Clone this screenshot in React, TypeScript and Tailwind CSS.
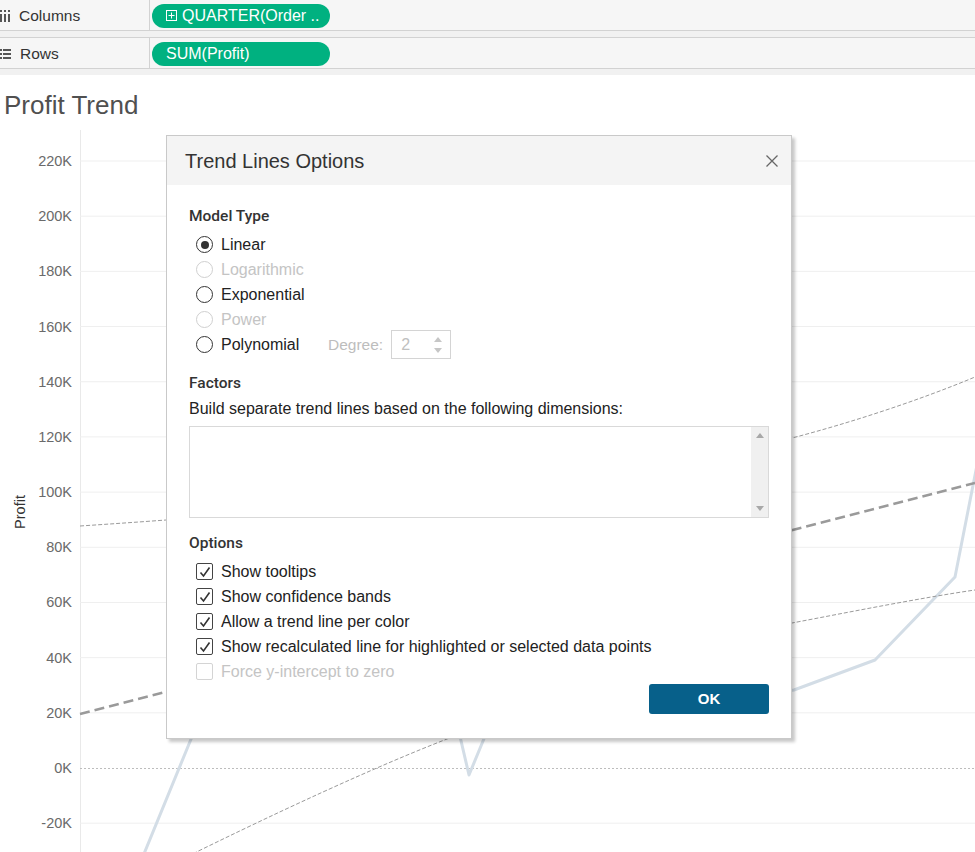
import React from "react";

const FONT = "font-['Liberation_Sans',Arial,sans-serif]";

function ColumnsIcon() {
  return (
    <svg width="10" height="12" viewBox="0 0 10 12" className="shrink-0">
      <rect x="0" y="0" width="2" height="2" fill="#555" />
      <rect x="0" y="4" width="2" height="8" fill="#555" />
      <rect x="4" y="0" width="2" height="2" fill="#555" />
      <rect x="4" y="4" width="2" height="8" fill="#555" />
      <rect x="8" y="0" width="2" height="2" fill="#555" />
      <rect x="8" y="4" width="2" height="8" fill="#555" />
    </svg>
  );
}

function RowsIcon() {
  return (
    <svg width="11" height="10" viewBox="0 0 11 10" className="shrink-0">
      <rect x="0" y="0" width="2" height="2" fill="#555" />
      <rect x="3" y="0" width="8" height="2" fill="#555" />
      <rect x="0" y="4" width="2" height="2" fill="#555" />
      <rect x="3" y="4" width="8" height="2" fill="#555" />
      <rect x="0" y="8" width="2" height="2" fill="#555" />
      <rect x="3" y="8" width="8" height="2" fill="#555" />
    </svg>
  );
}

function Shelf({ icon, label, children }: { icon: React.ReactNode; label: string; children: React.ReactNode }) {
  return (
    <div className="flex h-[31px] bg-[#f6f6f6] border-b border-[#d2d2d2]">
      <div className="w-[150px] flex items-center gap-[9px] border-r border-[#d2d2d2] pt-[1px]">
        {icon}
        <span className="text-[15.5px] text-[#333]">{label}</span>
      </div>
      <div className="flex items-center pl-[2px] pt-[1px]">{children}</div>
    </div>
  );
}

function Pill({ children }: { children: React.ReactNode }) {
  return (
    <div className="h-[24px] w-[178px] rounded-full bg-[#00b180] flex items-center pl-[14px] text-white text-[16px] whitespace-nowrap overflow-hidden">
      {children}
    </div>
  );
}

function Radio({ checked, disabled, label }: { checked?: boolean; disabled?: boolean; label: string }) {
  return (
    <div className="flex items-center h-[25px]">
      <div
        className={
          "ml-[7px] w-[17px] h-[17px] rounded-full border-[1.5px] flex items-center justify-center " +
          (disabled ? "border-[#d0d0d0]" : "border-[#333]")
        }
      >
        {checked && <div className="w-[8px] h-[8px] rounded-full bg-[#333]" />}
      </div>
      <span className={"ml-[8px] text-[16px] " + (disabled ? "text-[#c4c4c4]" : "text-[#222]")}>{label}</span>
    </div>
  );
}

function Check({ checked, disabled, label }: { checked?: boolean; disabled?: boolean; label: string }) {
  return (
    <div className="flex items-center h-[25px]">
      <div
        className={
          "ml-[7px] w-[17px] h-[17px] rounded-[2px] border flex items-center justify-center " +
          (disabled ? "border-[#d4d4d4]" : "border-[#444]")
        }
      >
        {checked && (
          <svg width="14" height="14" viewBox="0 0 14 14">
            <path d="M2.5 7.5 L5.5 11 L11.5 2.5" fill="none" stroke="#333" strokeWidth="1.6" />
          </svg>
        )}
      </div>
      <span className={"ml-[8px] text-[16px] " + (disabled ? "text-[#c4c4c4]" : "text-[#222]")}>{label}</span>
    </div>
  );
}

function Chart() {
  const y = (v: number) => 768 - (v / 20000) * 55.18;
  const ticks = [220, 200, 180, 160, 140, 120, 100, 80, 60, 40, 20, 0, -20];
  return (
    <svg width="975" height="722" viewBox="0 130 975 722" className="block">
      <line x1="80.5" y1="130" x2="80.5" y2="852" stroke="#e9e9e9" strokeWidth="1" />
      {ticks.map((t) => (
        <g key={t}>
          {t !== 0 && <line x1="80" x2="975" y1={y(t * 1000)} y2={y(t * 1000)} stroke="#efefef" strokeWidth="1" />}
          <text
            x="72"
            y={y(t * 1000) + 5}
            textAnchor="end"
            fontFamily="Liberation Sans, Arial, sans-serif"
            fontSize="14.5"
            fill="#6a6a6a"
          >
            {t}K
          </text>
        </g>
      ))}
      <line x1="80" x2="975" y1="768.5" y2="768.5" stroke="#bdbdbd" strokeWidth="1" strokeDasharray="2 2" />
      <text
        x="0"
        y="0"
        transform="translate(25 512) rotate(-90)"
        textAnchor="middle"
        fontFamily="Liberation Sans, Arial, sans-serif"
        fontSize="14.5"
        fill="#333"
      >
        Profit
      </text>
      {/* data line */}
      <polyline
        points="130,888 205,705 300,660 380,690 455,715 469,775 495,712 560,700 640,680 720,700 794,690 875,660 955,577 978,460"
        fill="none"
        stroke="#d3dde6"
        strokeWidth="3"
        strokeLinejoin="round"
      />
      {/* upper band */}
      <path
        d="M80,526 C400,505 650,475 792,438 C850,423 920,400 975,377"
        fill="none"
        stroke="#9a9a9a"
        strokeWidth="1"
        strokeDasharray="4 2"
      />
      {/* trend line */}
      <line x1="80" y1="714" x2="975" y2="483" stroke="#9a9a9a" strokeWidth="2.5" strokeDasharray="10 5" />
      {/* lower band */}
      <path
        d="M150,875 C280,810 380,765 447,739 C560,695 700,640 792,623 C850,612 920,598 975,590"
        fill="none"
        stroke="#9a9a9a"
        strokeWidth="1"
        strokeDasharray="4 2"
      />
    </svg>
  );
}

function SectionTitle({ children, className }: { children: React.ReactNode; className?: string }) {
  return (
    <div className={"font-['Roboto',Arial,sans-serif] font-medium text-[15.5px] leading-[20px] text-[#333] " + (className ?? "")}>
      {children}
    </div>
  );
}

function Dialog() {
  return (
    <div className="absolute left-[166px] top-[135px] w-[626px] bg-white border border-[#c9c9c9] shadow-[3px_3px_3px_rgba(0,0,0,0.22)]">
      <div className="h-[49px] bg-[#f4f4f4] flex items-center justify-between pl-[18px] pr-[13px]">
        <span className="text-[20px] text-[#333]">Trend Lines Options</span>
        <svg width="12" height="12" viewBox="0 0 12 12">
          <path d="M0.5 0.5 L11.5 11.5 M11.5 0.5 L0.5 11.5" stroke="#666" strokeWidth="1.3" />
        </svg>
      </div>
      <div className="pl-[22px] pr-[22px] pt-[21px] pb-[24px]">
        <SectionTitle>Model Type</SectionTitle>
        <div className="mt-[6px] flex flex-col">
          <Radio checked label="Linear" />
          <Radio disabled label="Logarithmic" />
          <Radio label="Exponential" />
          <Radio disabled label="Power" />
          <div className="flex items-center h-[25px]">
            <div className="w-[139px] shrink-0">
              <Radio label="Polynomial" />
            </div>
            <span className="text-[15.5px] text-[#bdbdbd]">Degree:</span>
            <div className="ml-[8px] w-[60px] h-[29px] border border-[#d4d4d4] flex items-center justify-between pl-[9px] pr-[7px]">
              <span className="text-[16px] text-[#c0c0c0]">2</span>
              <svg width="10" height="20" viewBox="0 0 10 20">
                <path d="M1 7 L5 2 L9 7 Z" fill="#c6c6c6" />
                <path d="M1 13 L5 18 L9 13 Z" fill="#c6c6c6" />
              </svg>
            </div>
          </div>
        </div>
        <SectionTitle className="mt-[16px]">Factors</SectionTitle>
        <div className="mt-[6px] text-[16px] leading-[20px] text-[#222]">
          Build separate trend lines based on the following dimensions:
        </div>
        <div className="mt-[7px] h-[92px] border border-[#d9d9d9] flex justify-end">
          <div className="w-[17px] bg-[#f0f0f0] flex flex-col items-center justify-between py-[6px]">
            <svg width="8" height="5" viewBox="0 0 8 5">
              <path d="M0 5 L4 0 L8 5 Z" fill="#a8a8a8" />
            </svg>
            <svg width="8" height="5" viewBox="0 0 8 5">
              <path d="M0 0 L4 5 L8 0 Z" fill="#a8a8a8" />
            </svg>
          </div>
        </div>
        <SectionTitle className="mt-[15px]">Options</SectionTitle>
        <div className="mt-[6px] flex flex-col">
          <Check checked label="Show tooltips" />
          <Check checked label="Show confidence bands" />
          <Check checked label="Allow a trend line per color" />
          <Check checked label="Show recalculated line for highlighted or selected data points" />
          <Check disabled label="Force y-intercept to zero" />
        </div>
        <div className="flex justify-end">
          <button className="w-[120px] h-[30px] rounded-[3px] bg-[#07608a] text-white text-[15px] font-bold">
            OK
          </button>
        </div>
      </div>
    </div>
  );
}

export default function App() {
  return (
    <div className={"relative w-[975px] h-[852px] overflow-hidden bg-white " + FONT}>
      <div className="bg-[#f1f1f1] pb-[6px]">
        <Shelf icon={<ColumnsIcon />} label="Columns">
          <Pill>
            <svg width="11" height="11" viewBox="0 0 11 11" className="mr-[5px] shrink-0">
              <rect x="0.5" y="0.5" width="10" height="10" fill="none" stroke="white" strokeWidth="1" />
              <path d="M5.5 2.5 V8.5 M2.5 5.5 H8.5" stroke="white" strokeWidth="1" />
            </svg>
            <span>QUARTER(Order ..</span>
          </Pill>
        </Shelf>
        <div className="h-[6px]" />
        <div className="border-t border-[#d2d2d2]">
          <Shelf icon={<RowsIcon />} label="Rows">
            <Pill>
              <span>SUM(Profit)</span>
            </Pill>
          </Shelf>
        </div>
      </div>
      <div className="flex flex-col">
        <div className="h-[55px] pt-[14px] pl-[4px] text-[26px] leading-[32px] text-[#505050]">Profit Trend</div>
        <Chart />
      </div>
      <Dialog />
    </div>
  );
}
